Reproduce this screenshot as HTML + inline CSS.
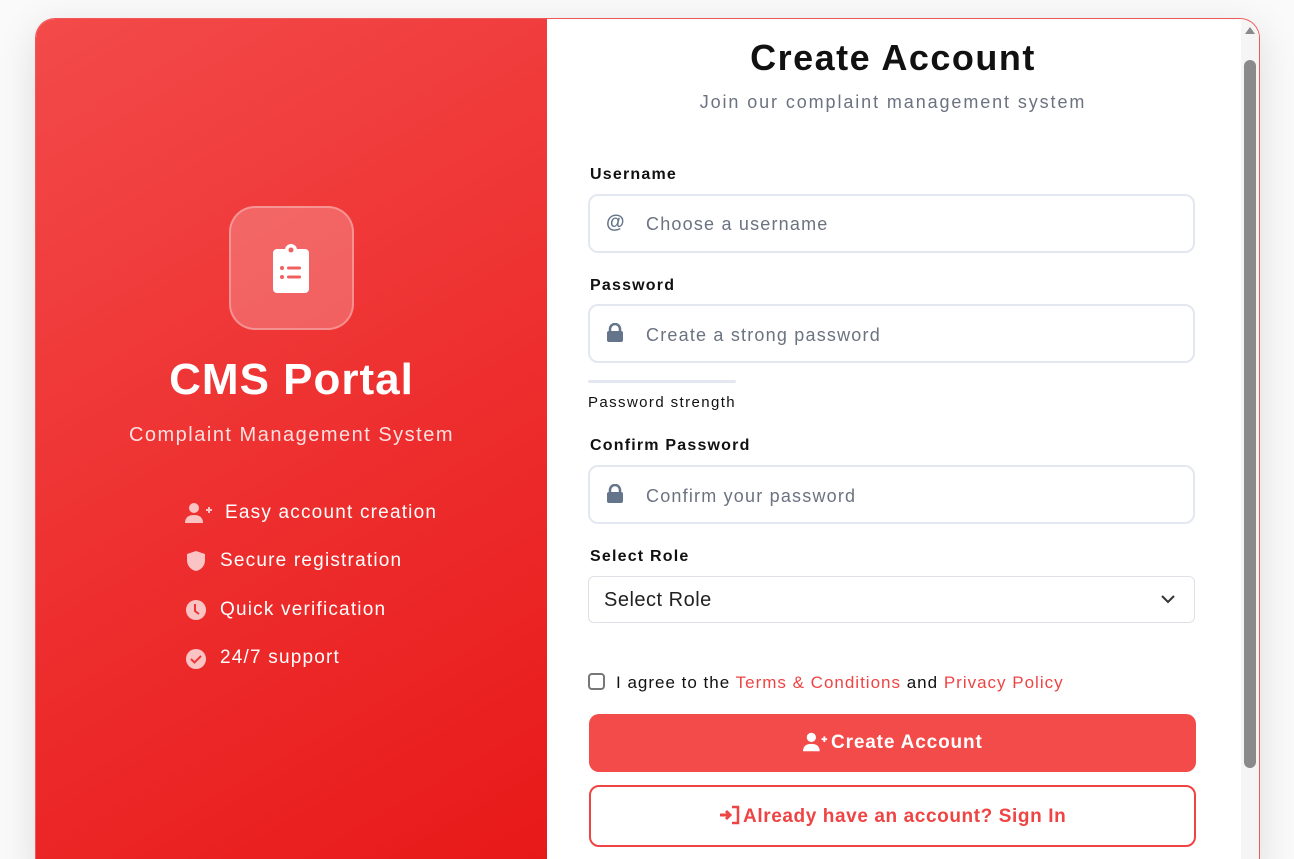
<!DOCTYPE html>
<html><head><style>
*{box-sizing:border-box;margin:0;padding:0}
html,body{width:1294px;height:859px;overflow:hidden}
body{background:#fafafa;font-family:"Liberation Sans",sans-serif;position:relative}
.card{position:absolute;left:35px;top:18px;width:1225px;height:860px;border-radius:20px 20px 0 0;overflow:hidden;background:#fff;border:1px solid #f05858;border-bottom:none;box-shadow:0 10px 40px rgba(0,0,0,.12)}
.left{position:absolute;left:0;top:0;width:511px;height:100%;background:linear-gradient(150deg,#f34a4a 0%,#ee3030 50%,#e81818 100%)}
.a{position:absolute;white-space:nowrap}
.logo{left:193px;top:187px;width:125px;height:124px;border-radius:26px;background:rgba(255,255,255,.22);border:2px solid rgba(255,255,255,.3)}
.w{color:#fff}
.lbl{font-size:16px;color:#111;font-weight:bold;letter-spacing:1.2px}
.inp{left:553px;width:607px;height:59px;border:2px solid #e3e7ef;border-radius:10px}
.ph{font-size:18px;color:#6b7280;letter-spacing:1.2px}
.feat{font-size:19px;color:#fff;letter-spacing:1.2px}
</style></head><body>
<div class="card">
<div class="left">
 <div class="a logo"></div>
 <svg class="a" style="left:236px;top:224px" width="38" height="52" viewBox="0 0 38 52"><rect x="1" y="6" width="36" height="44" rx="4" fill="#fff"/><circle cx="19" cy="7" r="6" fill="#fff"/><circle cx="19" cy="7" r="2.5" fill="#f06060"/><circle cx="10" cy="25" r="2" fill="#f06060"/><circle cx="10" cy="34" r="2" fill="#f06060"/><rect x="15" y="23.5" width="14" height="3" rx="1.5" fill="#f06060"/><rect x="15" y="32.5" width="14" height="3" rx="1.5" fill="#f06060"/></svg>
 <div class="a w" style="left:0;width:511px;text-align:center;top:336px;font-size:44px;font-weight:bold;letter-spacing:1px">CMS Portal</div>
 <div class="a" style="left:0;width:511px;text-align:center;top:405px;font-size:20px;color:#fde0e0;letter-spacing:1.5px">Complaint Management System</div>
 <svg class="a" style="left:149px;top:483px" width="28" height="22" viewBox="0 0 28 22"><circle cx="9" cy="6" r="5" fill="#fbc4c4"/><path d="M0 21c0-6 4-8 9-8s9 2 9 8z" fill="#fbc4c4"/><path d="M21 8h6M24 5v6" stroke="#fbc4c4" stroke-width="2"/></svg>
 <div class="a feat" style="left:189px;top:483px">Easy account creation</div>
 <svg class="a" style="left:150px;top:531px" width="20" height="22" viewBox="0 0 20 22"><path d="M10 1L1 4v6c0 6 4 10 9 11 5-1 9-5 9-11V4z" fill="#fbc4c4"/></svg>
 <div class="a feat" style="left:184px;top:531px">Secure registration</div>
 <svg class="a" style="left:149px;top:580px" width="22" height="22" viewBox="0 0 22 22"><circle cx="11" cy="11" r="10" fill="#fbc4c4"/><path d="M10 5v7l4 3" stroke="#ee3535" stroke-width="2" fill="none"/></svg>
 <div class="a feat" style="left:184px;top:580px">Quick verification</div>
 <svg class="a" style="left:149px;top:629px" width="22" height="22" viewBox="0 0 22 22"><circle cx="11" cy="11" r="10" fill="#fbc4c4"/><path d="M6 11l3.5 3.5L16 8" stroke="#ee3535" stroke-width="2" fill="none"/></svg>
 <div class="a feat" style="left:184px;top:628px">24/7 support</div>
</div>
<div class="a" style="left:1205px;top:0;width:18px;height:100%;background:#f5f5f5"></div>
<div class="a" style="left:1208px;top:41px;width:12px;height:708px;border-radius:6px;background:#8a8a8a"></div>
<div class="a" style="left:1209px;top:8px;width:0;height:0;border-left:5px solid transparent;border-right:5px solid transparent;border-bottom:7px solid #8a8a8a"></div>
</div>
<div class="a" style="left:546px;width:694px;text-align:center;top:37px;font-size:36px;font-weight:bold;color:#111;letter-spacing:1.5px">Create Account</div>
<div class="a" style="left:546px;width:694px;text-align:center;top:92px;font-size:18px;color:#6b7280;letter-spacing:1.9px">Join our complaint management system</div>
<div class="a lbl" style="left:590px;top:166px">Username</div>
<div class="a inp" style="left:588px;top:194px"></div>
<div class="a" style="left:606px;top:212px;font-size:19px;color:#64748b;font-weight:bold">@</div>
<div class="a ph" style="left:646px;top:214px">Choose a username</div>
<div class="a lbl" style="left:590px;top:277px">Password</div>
<div class="a inp" style="left:588px;top:304px"></div>
<svg class="a" style="left:606px;top:323px" width="18" height="20" viewBox="0 0 18 20"><path d="M4 9V6a5 5 0 0110 0v3" stroke="#64748b" stroke-width="2.5" fill="none"/><rect x="1" y="8" width="16" height="11" rx="2" fill="#64748b"/></svg>
<div class="a ph" style="left:646px;top:325px">Create a strong password</div>
<div class="a" style="left:588px;top:380px;width:148px;height:3px;background:#e3e7ef;border-radius:2px"></div>
<div class="a" style="left:588px;top:394px;font-size:15px;color:#111;letter-spacing:1.4px">Password strength</div>
<div class="a lbl" style="left:590px;top:437px">Confirm Password</div>
<div class="a inp" style="left:588px;top:465px"></div>
<svg class="a" style="left:606px;top:484px" width="18" height="20" viewBox="0 0 18 20"><path d="M4 9V6a5 5 0 0110 0v3" stroke="#64748b" stroke-width="2.5" fill="none"/><rect x="1" y="8" width="16" height="11" rx="2" fill="#64748b"/></svg>
<div class="a ph" style="left:646px;top:486px">Confirm your password</div>
<div class="a lbl" style="left:590px;top:548px">Select Role</div>
<div class="a" style="left:588px;top:576px;width:607px;height:47px;border:1px solid #dee2e6;border-radius:6px"></div>
<div class="a" style="left:604px;top:589px;font-size:20px;color:#222;letter-spacing:0.5px">Select Role</div>
<svg class="a" style="left:1160px;top:593px" width="16" height="12" viewBox="0 0 16 12"><path d="M2 3l6 6 6-6" stroke="#333" stroke-width="2" fill="none"/></svg>
<div class="a" style="left:588px;top:673px;width:17px;height:17px;border:2px solid #777;border-radius:4px"></div>
<div class="a" style="left:616px;top:673px;font-size:17px;color:#111;letter-spacing:1px">I agree to the <span style="color:#ef4444">Terms &amp; Conditions</span> and <span style="color:#ef4444">Privacy Policy</span></div>
<div class="a" style="left:589px;top:714px;width:607px;height:58px;background:#f34a4a;border-radius:10px"></div>
<svg class="a" style="left:803px;top:731px" width="26" height="22" viewBox="0 0 28 22"><circle cx="9" cy="6" r="5" fill="#fff"/><path d="M0 21c0-6 4-8 9-8s9 2 9 8z" fill="#fff"/><path d="M20 8h6M23 5v6" stroke="#fff" stroke-width="2"/></svg>
<div class="a" style="left:831px;top:732px;font-size:19px;font-weight:bold;color:#fff;letter-spacing:0.85px">Create Account</div>
<div class="a" style="left:589px;top:785px;width:607px;height:62px;border:2px solid #ef4444;border-radius:10px"></div>
<svg class="a" style="left:719px;top:805px" width="22" height="20" viewBox="0 0 22 20"><path d="M1 10h9M7 6l4 4-4 4" stroke="#ef4444" stroke-width="3" fill="none"/><path d="M13 2h6v16h-6" stroke="#ef4444" stroke-width="2.5" fill="none"/></svg>
<div class="a" style="left:743px;top:806px;font-size:19px;font-weight:bold;color:#ef4444;letter-spacing:0.6px">Already have an account? Sign In</div>
</body></html>
